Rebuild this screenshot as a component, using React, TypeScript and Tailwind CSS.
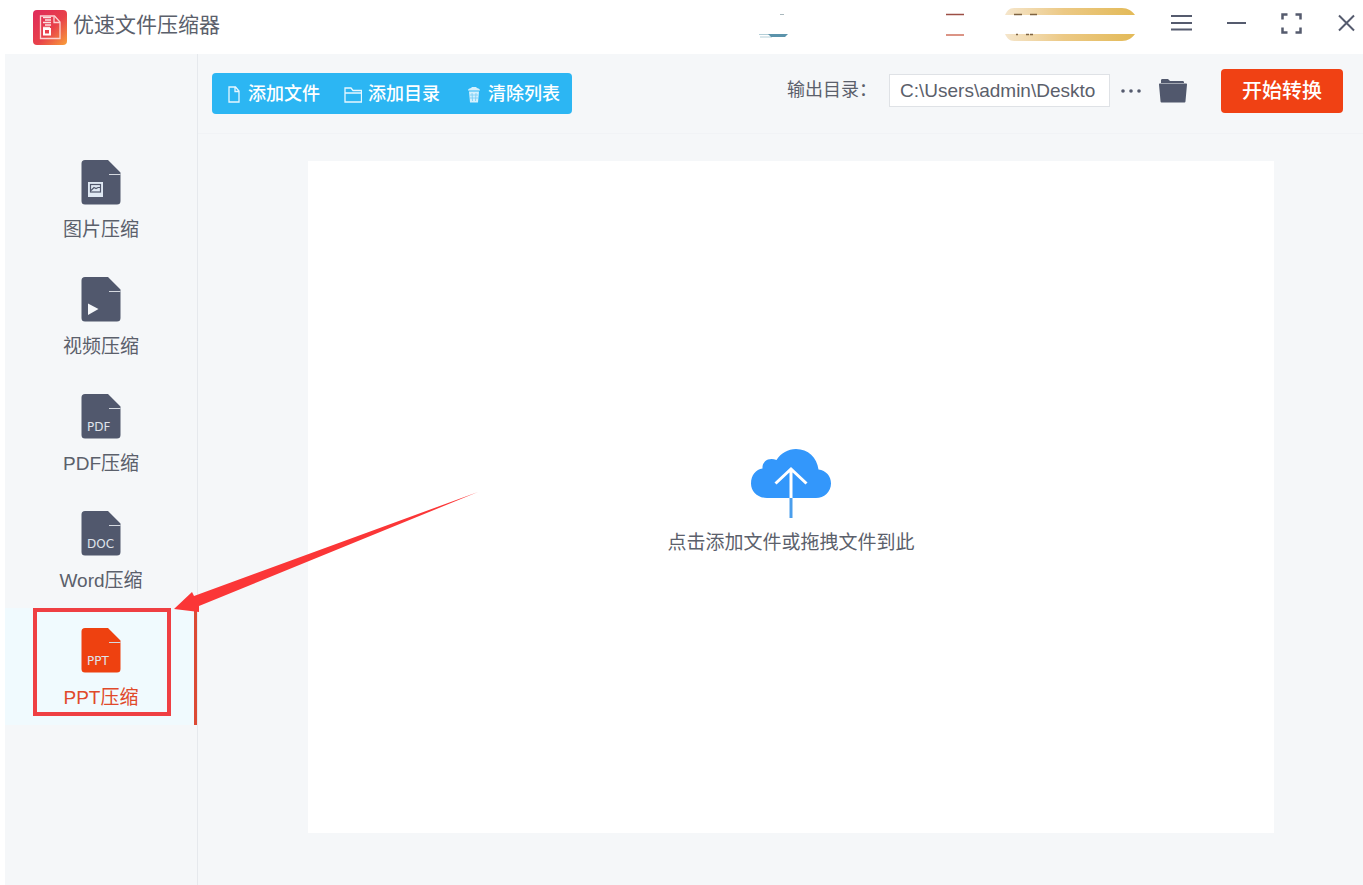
import type { ReactNode } from "react";

interface NavItem {
  label: string;
  badge: ReactNode;
  active?: boolean;
}

const NAV_ITEMS: NavItem[] = [
  { label: "图片压缩", badge: <ImageBadge /> },
  { label: "视频压缩", badge: <path d="M7 26.5l10.500 5.500L7 38z" fill="#f5f7fa" /> },
  { label: "PDF压缩", badge: <FileType name="PDF" /> },
  { label: "Word压缩", badge: <FileType name="DOC" /> },
  { label: "PPT压缩", badge: <FileType name="PPT" />, active: true },
];

export default function App() {
  return (
    <div className="relative flex min-h-screen flex-col overflow-hidden bg-white pl-[5px] font-['Liberation_Sans','Noto_Sans_CJK_SC',sans-serif] text-[#5b606b]">
      <TitleBar />
      <div className="flex grow bg-[#f5f7f9]">
        <Sidebar />
        <main className="flex min-w-0 grow flex-col">
          <Toolbar />
          <DropZone />
        </main>
      </div>
      <Arrow />
    </div>
  );
}

function TitleBar() {
  return (
    <header className="flex h-[54px] items-center pr-1.5 pl-7">
      <AppLogo />
      <h1 className="ml-1.5 pb-1 text-[21px] leading-7">优速文件压缩器</h1>
      <div className="ml-auto flex h-full items-center">
        <svg width="32" height="40" viewBox="0 0 32 40" className="mr-[156px]" aria-hidden="true">
          <path d="M23 7.5h4" stroke="#a9b8bd" strokeWidth="1" />
          <path d="M2 27.5h12M3 30h12" stroke="#b4cfd8" strokeWidth="1" />
          <path d="M11 27h20l-3 3H14z" fill="#5b93ab" />
        </svg>
        <svg width="20" height="40" viewBox="0 0 20 40" className="mr-10" aria-hidden="true">
          <path d="M1 7.5h18" stroke="#9c4f45" strokeWidth="1.5" />
          <path d="M1 28h18" stroke="#cf705c" strokeWidth="1.5" />
        </svg>
        <svg width="130" height="40" viewBox="0 0 130 40" className="mr-9" aria-hidden="true">
          <defs>
            <linearGradient id="gold">
              <stop offset="0" stopColor="#f5e6cc" />
              <stop offset="0.45" stopColor="#ecc985" />
              <stop offset="1" stopColor="#e3ba58" />
            </linearGradient>
          </defs>
          <path d="M0 8c2-4 4-7 9-7h108c6 0 10 3 13 7z" fill="url(#gold)" />
          <path d="M0 27h130c-3 4-7 7-13 7H9c-5 0-7-3-9-7z" fill="url(#gold)" />
          <path d="M9 7.5h8M25 7.5h7" stroke="#7f6340" strokeWidth="1.5" />
          <path d="M11 27.500h2M21 27.500h3M25 27.500h3" stroke="#7f6340" strokeWidth="1.5" />
        </svg>
        <div className="flex items-center gap-[34px] pb-2 text-[#555b6e]">
          <WindowButton label="菜单">
            <path d="M0 3h21M0 10h21M0 16.500h21" strokeWidth="2" />
          </WindowButton>
          <WindowButton label="最小化">
            <path d="M1 10h19" strokeWidth="2" />
          </WindowButton>
          <WindowButton label="最大化">
            <path
              d="M1.500 6.500V1.500H6.500M14.500 1.500h5V6.500M19.500 14.500v5H14.500M6.500 19.500H1.500V14.500"
              strokeWidth="2.5"
            />
          </WindowButton>
          <WindowButton label="关闭">
            <path d="M3 2.500l15 15M18 2.500L3 17.500" strokeWidth="2" />
          </WindowButton>
        </div>
      </div>
    </header>
  );
}

function WindowButton({ label, children }: { label: string; children: ReactNode }) {
  return (
    <button type="button" aria-label={label}>
      <svg width="21" height="21" viewBox="0 0 21 21" fill="none" stroke="currentColor">
        {children}
      </svg>
    </button>
  );
}

function AppLogo() {
  return (
    <svg width="34" height="35" viewBox="0 0 34 35" aria-hidden="true">
      <defs>
        <linearGradient id="logo" x1="0" y1="0" x2="1" y2="1">
          <stop offset="0" stopColor="#df2a5c" />
          <stop offset="0.55" stopColor="#e8414a" />
          <stop offset="1" stopColor="#f9a03a" />
        </linearGradient>
      </defs>
      <rect width="34" height="35" rx="4" fill="url(#logo)" />
      <path d="M7.500 6h14l5.500 6v16.500H7.500z" fill="none" stroke="#fbd3d3" strokeWidth="1.3" />
      <path d="M21 6.500v6h6" fill="none" stroke="#fbd3d3" strokeWidth="1.3" />
      <path d="M10 7.500h8M12 10h6M10 12.500h8M12 15h6M10 17.500h7" stroke="#fbe3e3" strokeWidth="1.4" />
      <rect x="11" y="19" width="6" height="5.500" fill="none" stroke="#fff" strokeWidth="2" />
    </svg>
  );
}

function Sidebar() {
  return (
    <nav className="w-[193px] shrink-0 border-r border-[#e6e9ed] pt-[86px]">
      {NAV_ITEMS.map((item) => (
        <button
          key={item.label}
          type="button"
          aria-current={item.active ? "page" : undefined}
          className={`relative flex h-[117px] w-full flex-col items-center pt-5 ${
            item.active ? "bg-[#f0fafe] text-[#e0492a]" : ""
          }`}
        >
          <svg width="40" height="45" viewBox="0 0 40 45" aria-hidden="true">
            <path
              d="M4 0h23l12.500 12.500V41a3.500 3.500 0 0 1-3.500 3.500H4A3.500 3.500 0 0 1 .5 41V3.500A3.500 3.500 0 0 1 4 0z"
              fill={item.active ? "#ee4110" : "#51586d"}
            />
            <path d="M28 14.500h11.500" stroke="#d5d9e0" strokeWidth="1" />
            {item.badge}
          </svg>
          <span className="mt-[11px] text-[19px] leading-7">{item.label}</span>
          {item.active && (
            <>
              <span className="absolute inset-y-0 right-0 w-[3px] bg-[#dc4a35]" />
              <span className="absolute top-0 left-7 h-[108px] w-[138px] border-4 border-[#ef3f43]" />
            </>
          )}
        </button>
      ))}
    </nav>
  );
}

function FileType({ name }: { name: string }) {
  return (
    <text x="6" y="37" fontSize="12" fill="#dfe3ea" fontFamily="DejaVu Sans, sans-serif">
      {name}
    </text>
  );
}

function ImageBadge() {
  return (
    <>
      <rect x="7" y="22" width="15" height="15" fill="#dfe8f3" />
      <rect x="9.500" y="24.500" width="10" height="7.500" fill="none" stroke="#51586d" strokeWidth="1.2" />
      <path d="M10 30.500l3-3 2 1 2-1h3" fill="none" stroke="#51586d" strokeWidth="1.2" />
    </>
  );
}

function Toolbar() {
  return (
    <div className="flex h-[80px] items-center border-b border-[#f1f3f6] pr-5 pl-3.5">
      <div className="flex h-[41px] items-center gap-6 rounded-sm bg-[#2cb6f3] px-3 pt-0.5 text-[18px] font-medium text-white">
        <button type="button" className="flex w-24 items-center justify-end gap-2">
          <svg width="12" height="17" viewBox="0 0 12 17" fill="none" stroke="#e6f7ff" strokeWidth="1.3">
            <path d="M1 1h6.500L11 5v11H1zM7 1v4.500h4" />
          </svg>
          添加文件
        </button>
        <button type="button" className="flex w-24 items-center justify-end gap-1.5">
          <svg width="18" height="16" viewBox="0 0 18 16" fill="none" stroke="#e6f7ff" strokeWidth="1.3" className="shrink-0">
            <path d="M1 15V1h6l2 2.500h8.500V15zM1 6h16.500" />
          </svg>
          添加目录
        </button>
        <button type="button" className="flex w-24 items-center justify-end gap-2">
          <svg width="12" height="17" viewBox="0 0 12 17" fill="none">
            <path d="M0 4.500C0 2 3 3 4 1h4c1 2 4 1 4 3.500zM1 5.500h10l-1 11H2z" fill="#d4f0fd" />
            <path d="M4 7l.5 8M8 7l-.5 8M2 9h8M2 12h8" stroke="#74cdf6" strokeWidth="0.8" />
          </svg>
          清除列表
        </button>
      </div>

      <div className="ml-auto flex items-center pb-1.5">
        <label htmlFor="output-dir" className="text-[18px]">
          输出目录：
        </label>
        <input
          id="output-dir"
          type="text"
          readOnly
          value="C:\Users\admin\Deskto"
          className="ml-3 h-[33px] w-[221px] border border-[#dfe2e6] bg-white px-2.5 text-[19px] outline-none"
        />
        <button type="button" aria-label="更多" className="ml-2.5">
          <svg width="22" height="6" viewBox="0 0 22 6" fill="#555b6e">
            <circle cx="3" cy="3" r="1.8" />
            <circle cx="11" cy="3" r="1.8" />
            <circle cx="19" cy="3" r="1.8" />
          </svg>
        </button>
        <button type="button" aria-label="打开目录" className="ml-[17px]">
          <svg width="28" height="24" viewBox="0 0 28 24" fill="#51586d">
            <path d="M2 4V1.500C2 .5 2.500 0 3.500 0H9l2 2h12.500c1 0 1.500.5 1.500 1.500V4z" />
            <path d="M1 4.500h26c.7 0 1 .4 1 1L26.500 22c0 1-.5 1.500-1.500 1.500H3c-1 0-1.500-.5-1.500-1.500L0 5.500c0-.6.300-1 1-1z" />
          </svg>
        </button>
        <button
          type="button"
          className="ml-[34px] h-11 w-[122px] rounded bg-[#f04114] text-[20px] font-medium text-white"
        >
          开始转换
        </button>
      </div>
    </div>
  );
}

function DropZone() {
  return (
    <button
      type="button"
      className="mt-[27px] mr-[89px] mb-[52px] ml-[110px] flex grow flex-col items-center justify-center bg-white pt-3"
    >
      <svg width="80" height="70" viewBox="0 0 80 70" aria-hidden="true">
        <path
          d="M16 49C7 49 0 43 0 34.500 0 26 5 20.500 11.500 19.500 11 12 18 8 25.500 11 30 4 37 0 45 0c12 0 21 8.500 22.500 20.500C75 21.500 80 27 80 34.500 80 43 73 49 65 49z"
          fill="#3397fb"
        />
        <path d="M24.500 34.500L40 20l15.500 14.500M40 20v29" fill="none" stroke="#fff" strokeWidth="3" />
        <path d="M40 49v20" stroke="#4a9eec" strokeWidth="3" />
      </svg>
      <span className="mt-2.5 text-[19px] leading-7">点击添加文件或拖拽文件到此</span>
    </button>
  );
}

function Arrow() {
  return (
    <svg
      width="306"
      height="122"
      viewBox="0 0 306 122"
      className="pointer-events-none absolute top-[491px] left-[174px]"
      aria-hidden="true"
    >
      <path d="M0 118L18 101l2 4L304 1 25 115v6z" fill="#fb3637" />
    </svg>
  );
}
